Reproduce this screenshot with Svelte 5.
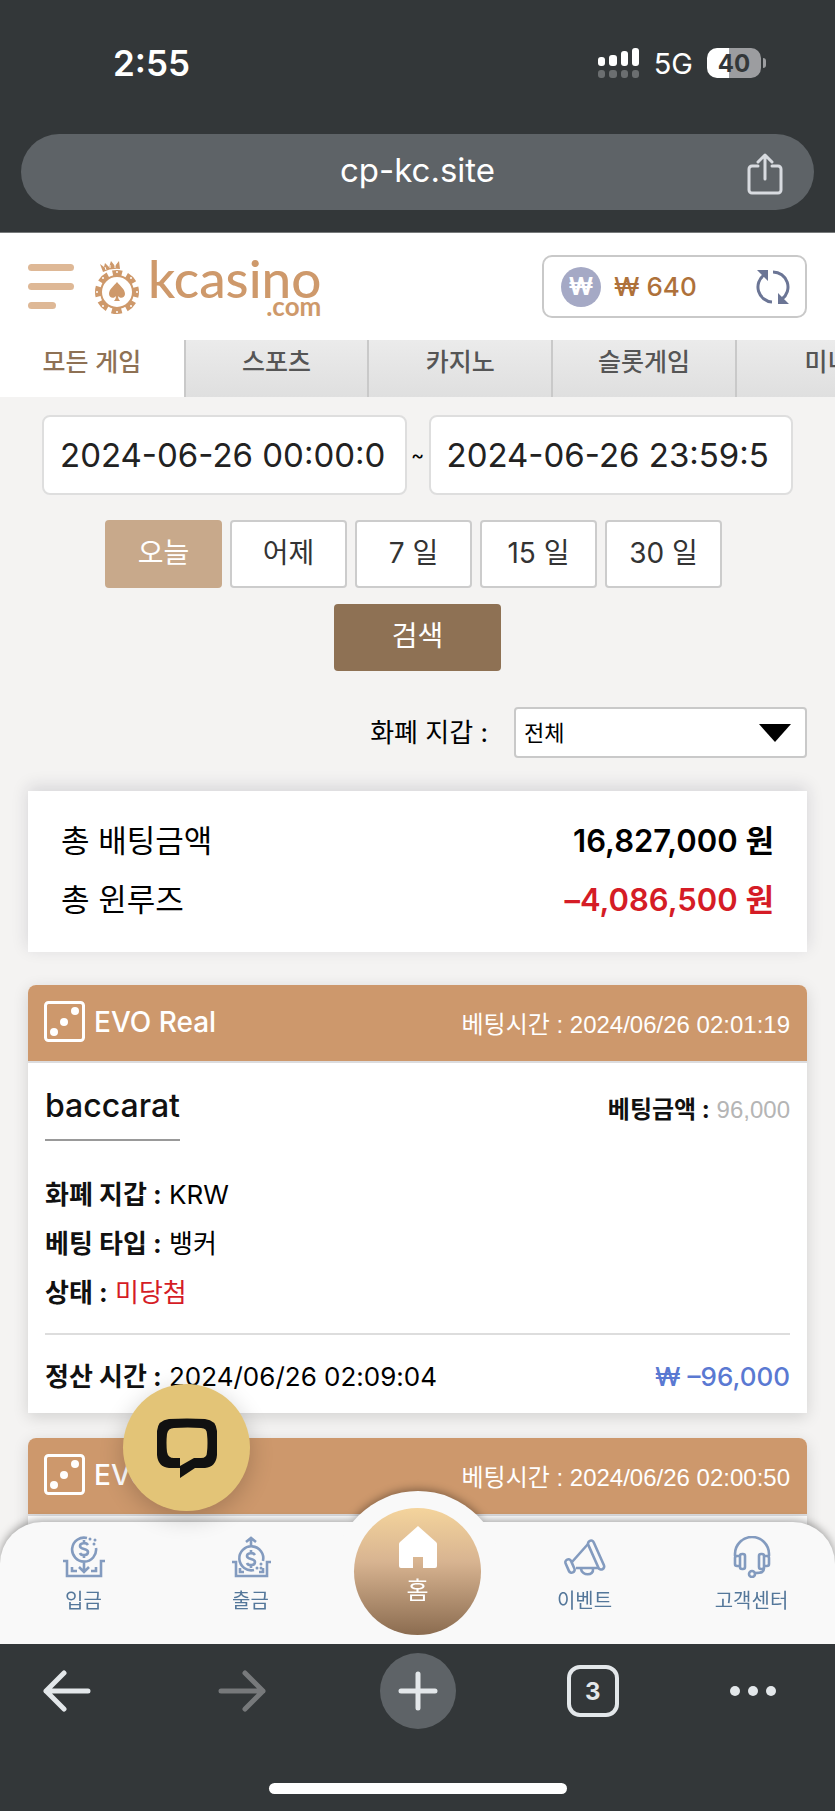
<script>
  const tabs = ['모든 게임', '스포츠', '카지노', '슬롯게임', '미니'];
  const ranges = ['오늘', '어제', '7 일', '15 일', '30 일'];

  const bets = [
    {
      vendor: 'EVO Real',
      placed: '2024/06/26 02:01:19',
      game: 'baccarat',
      amount: '96,000',
      wallet: 'KRW',
      type: '뱅커',
      status: '미당첨',
      settled: '2024/06/26 02:09:04',
      result: '₩ –96,000',
    },
    {
      vendor: 'EVO Real',
      placed: '2024/06/26 02:00:50',
      game: 'baccarat',
      amount: '96,000',
      wallet: 'KRW',
      type: '뱅커',
      status: '미당첨',
      settled: '2024/06/26 02:09:04',
      result: '₩ –96,000',
    },
  ];

  let activeTab = tabs[0];
  let activeRange = ranges[0];
  let from = '2024-06-26 00:00:0';
  let to = '2024-06-26 23:59:5';
  let wallet = 'all';
</script>

<div class="phone">
  <div class="browser-top">
    <div class="status">
      <span class="time">2:55</span>
      <div class="status-right">
        <svg width="42" height="31" viewBox="0 0 42 31" aria-hidden="true">
          <g fill="#fff">
            <rect x="0" y="9" width="7" height="9" rx="3" />
            <rect x="11" y="7" width="8" height="11" rx="3" />
            <rect x="23" y="3" width="7" height="15" rx="3" />
            <rect x="34" y="0" width="7" height="18" rx="3" />
          </g>
          <g fill="#6b6e70">
            <rect x="0" y="22" width="7" height="8" rx="3" />
            <rect x="11" y="22" width="8" height="8" rx="3" />
            <rect x="23" y="22" width="7" height="8" rx="3" />
            <rect x="34" y="22" width="7" height="8" rx="3" />
          </g>
        </svg>
        <span class="network">5G</span>
        <div class="battery"><span>40</span></div>
      </div>
    </div>
    <div class="address">
      <span class="url">cp-kc.site</span>
      <button class="share" aria-label="공유">
        <svg width="36" height="42" viewBox="0 0 36 42" fill="none" stroke="#d8dbe0" stroke-width="3" stroke-linecap="round" stroke-linejoin="round">
          <path d="M11 13H5a3 3 0 0 0-3 3v21a3 3 0 0 0 3 3h26a3 3 0 0 0 3-3V16a3 3 0 0 0-3-3h-6M18 26V2M11 9l7-7 7 7" />
        </svg>
      </button>
    </div>
  </div>

  <div class="viewport">
    <div class="page">
      <header>
        <button class="menu" aria-label="메뉴"><i></i><i></i><i></i></button>
        <a class="logo" href="/">
          <svg width="46" height="56" viewBox="0 0 46 56" aria-hidden="true">
            <circle cx="23" cy="33" r="19" fill="none" stroke="#ce996b" stroke-width="6" stroke-dasharray="10 4.9" stroke-dashoffset="5" transform="rotate(-90 23 33)" />
            <circle cx="23" cy="33" r="16" fill="#fff" stroke="#ce996b" stroke-width="2" />
            <g fill="#fff">
              <circle cx="23" cy="13" r="1" /><circle cx="37" cy="19" r="1" /><circle cx="43" cy="33" r="1" />
              <circle cx="37" cy="47" r="1" /><circle cx="23" cy="53" r="1" /><circle cx="9" cy="47" r="1" />
              <circle cx="3" cy="33" r="1" /><circle cx="9" cy="19" r="1" />
            </g>
            <path fill="#ce996b" d="M23 23c3 4 8 7 8 12 0 4-5 5-7 2 0 2 1 4 2 5h-6c1-1 2-3 2-5-2 3-7 2-7-2 0-5 5-8 8-12z" />
            <path fill="#ce996b" d="M9 13 6 5l4 3 1-4 4 4 2-6 4 5 4-5 1 8q-9-1-17 3z" />
            <path fill="none" stroke="#fff" d="m12 11-1-3M16 9V6M21 9V6" />
          </svg>
          <span class="wordmark"><b>kcasino</b><small>.com</small></span>
        </a>
        <div class="balance">
          <span class="coin">₩</span>
          <span class="amount">₩ 640</span>
          <button class="refresh" aria-label="새로고침">
            <svg width="36" height="34" viewBox="0 0 36 34">
              <path d="M17 32A15 15 0 0 1 9 5M18 2a15 15 0 0 1 9 27" fill="none" stroke="#6b7595" stroke-width="3" />
              <path d="M2 0h11v11zM34 34H23V23z" fill="#6b7595" />
            </svg>
          </button>
        </div>
      </header>

      <div class="tabs">
        {#each tabs as tab}
          <button class:active={tab === activeTab} on:click={() => (activeTab = tab)}>{tab}</button>
        {/each}
      </div>

      <form class="filter" on:submit|preventDefault>
        <div class="dates">
          <input type="text" aria-label="시작" bind:value={from} />
          <span>~</span>
          <input type="text" aria-label="종료" bind:value={to} />
        </div>
        <div class="ranges">
          {#each ranges as range}
            <button type="button" class:active={range === activeRange} on:click={() => (activeRange = range)}>{range}</button>
          {/each}
        </div>
        <button class="search" type="submit">검색</button>
      </form>

      <div class="content">
        <div class="wallet">
          <label for="wallet">화폐 지갑 :</label>
          <div class="select">
            <select id="wallet" bind:value={wallet}>
              <option value="all">전체</option>
              <option value="krw">KRW</option>
            </select>
            <svg width="32" height="18" viewBox="0 0 32 18" aria-hidden="true"><path d="M0 0h32L16 18z" /></svg>
          </div>
        </div>

        <dl class="summary">
          <div><dt>총 배팅금액</dt><dd>16,827,000 원</dd></div>
          <div><dt>총 윈루즈</dt><dd class="loss">–4,086,500 원</dd></div>
        </dl>

        {#each bets as bet}
          <article class="bet">
            <div class="bet-head">
              <svg width="42" height="42" viewBox="0 0 42 42" aria-hidden="true">
                <rect x="1.5" y="1.5" width="38" height="38" rx="3" fill="none" stroke="#fff" stroke-width="3" />
                <g fill="#fff"><circle cx="31" cy="10" r="4" /><circle cx="20" cy="21" r="4" /><circle cx="10" cy="31" r="4" /></g>
              </svg>
              <h2>{bet.vendor}</h2>
              <span class="placed">베팅시간 : {bet.placed}</span>
            </div>
            <div class="bet-body">
              <div class="bet-title">
                <h3>{bet.game}</h3>
                <p><strong>베팅금액 :</strong> <span class="stake">{bet.amount}</span></p>
              </div>
              <p><strong>화폐 지갑 :</strong> {bet.wallet}</p>
              <p><strong>베팅 타입 :</strong> {bet.type}</p>
              <p><strong>상태 :</strong> <span class="loss">{bet.status}</span></p>
              <div class="bet-foot">
                <p><strong>정산 시간 :</strong> {bet.settled}</p>
                <span class="result">{bet.result}</span>
              </div>
            </div>
          </article>
        {/each}
      </div>
    </div>

    <nav>
      <a href="/deposit">
        <svg width="42" height="42" viewBox="0 0 42 42">
          <path d="M0 25h4v15h34V25h4M9 31v4h5M33 31v4h-5M21 25v9M16 31l5 5 5-5M24 2a12 12 0 1 0 9 10" />
          <path d="M25 9c-2-3-8-2-8 1 0 4 8 2 8 6 0 4-7 4-8 1M21 4v3M21 18v4" />
          <path class="dots" d="M27 3v.1M31 8v.1M32 4v.1" />
        </svg>
        입금
      </a>
      <a href="/withdraw">
        <svg width="42" height="42" viewBox="0 0 42 42">
          <path d="M2 26h4v14h31V26h4M10 32v4h4M33 32v4h-4M21 11V2M16 6l5-4 5 4M24 34a12 12 0 1 1 9-9" />
          <path d="M25 19c-2-3-8-2-8 1 0 4 8 2 8 6 0 4-7 4-8 1M21 14v3M21 28v4" />
          <path class="dots" d="M27 32v.1M31 28v.1M31 32v.1" />
        </svg>
        출금
      </a>
      <a class="home" href="/">
        <svg width="44" height="42" viewBox="0 0 44 42"><path d="M22 0 40 16q1 1 1 2v22q0 2-2 2H27V31H17v11H5q-2 0-2-2V18q0-1 1-2z" /></svg>
        홈
      </a>
      <a href="/event">
        <svg width="42" height="42" viewBox="0 0 42 42">
          <rect x="29" y="4" width="6" height="31" rx="3" transform="rotate(-24 31 19)" />
          <rect x="3" y="23" width="6" height="14" rx="3" transform="rotate(-24 6 30)" />
          <path d="M8 26 24 8M12 32h23M17 33c1 7 13 7 12 0" />
        </svg>
        이벤트
      </a>
      <a href="/support">
        <svg width="42" height="42" viewBox="0 0 42 42">
          <path d="M4 20v-2a17 17 0 0 1 34 0v2M9 20H6q-2 0-2 2v6q0 2 2 2h3M33 20h3q2 0 2 2v6q0 2-2 2h-3M33 32c0 4-2 5-9 5" />
          <rect x="9" y="18" width="5" height="15" rx="2" /><rect x="28" y="18" width="5" height="15" rx="2" />
          <circle cx="21" cy="38" r="3" />
        </svg>
        고객센터
      </a>
    </nav>

    <button class="chat" aria-label="채팅">
      <svg width="60" height="60" viewBox="0 0 60 60">
        <path fill="#111" fill-rule="evenodd" d="M12 1q18-1 36 0 11 1 12 12 1 12 0 24-1 12-12 13H38L23 60V50H12Q1 49 0 37-1 25 0 13 1 2 12 1zM17 10q-6 0-7 6-1 9 0 18 1 6 7 6h6v8l14-8h7q6 0 6-6 1-9 0-18 0-6-6-6-13-1-27 0z" />
      </svg>
    </button>
  </div>

  <div class="browser-bottom">
    <div class="toolbar">
      <button aria-label="뒤로"><svg width="50" height="42" viewBox="0 0 50 42"><path d="M46 21H4M22 3 4 21l18 18" /></svg></button>
      <button aria-label="앞으로" disabled><svg width="50" height="42" viewBox="0 0 50 42"><path d="M4 21h42M28 3l18 18-18 18" /></svg></button>
      <button aria-label="새 탭"><span class="plus"><svg width="42" height="42" viewBox="0 0 42 42"><path d="M21 4v34M4 21h34" /></svg></span></button>
      <button aria-label="탭 목록"><span class="count">3</span></button>
      <button aria-label="더보기"><svg width="50" height="12" viewBox="0 0 50 12"><g fill="#e3e7ea" stroke="none"><circle cx="7" cy="6" r="5" /><circle cx="25" cy="6" r="5" /><circle cx="43" cy="6" r="5" /></g></svg></button>
    </div>
    <div class="indicator"></div>
  </div>
</div>

<style>
  :global(body) {
    background: #333739;
  }

  .phone, .phone * {
    box-sizing: border-box;
  }

  .phone {
    color: #000;
    display: flex;
    flex-direction: column;
    font-family: Inter, "Noto Sans CJK KR", sans-serif;
    font-size: 26px;
    height: 100vh;
  }

  button {
    background: none;
    border: 0;
    color: inherit;
    font: inherit;
    padding: 0;
  }

  a {
    color: inherit;
    text-decoration: none;
  }

  svg {
    display: block;
    flex: none;
  }

  h2, h3, p, dl, dd {
    margin: 0;
  }

  /* browser chrome */
  .browser-top {
    background: #333739;
    border-bottom: 1px solid #777a7b;
    color: #fff;
    flex: none;
    padding: 0 21px 22px;
  }

  .status {
    align-items: center;
    display: flex;
    height: 134px;
    justify-content: space-between;
    padding: 0 53px 8px 92px;
  }

  .time {
    font-size: 35px;
    font-weight: 600;
  }

  .status-right {
    align-items: center;
    display: flex;
    gap: 14px;
  }

  .network {
    font-size: 29px;
  }

  .battery {
    align-items: center;
    background: linear-gradient(90deg, #fff 40%, #9c9da0 40%);
    border-radius: 10px;
    color: #333739;
    display: flex;
    font-size: 24px;
    font-weight: 700;
    height: 30px;
    justify-content: center;
    position: relative;
    width: 54px;
  }

  .battery::after {
    background: #9c9da0;
    border-radius: 0 4px 4px 0;
    content: "";
    height: 10px;
    position: absolute;
    right: -5px;
    width: 3px;
  }

  .address {
    align-items: center;
    background: #5e6367;
    border-radius: 38px;
    display: flex;
    font-size: 33px;
    height: 76px;
    justify-content: center;
    position: relative;
  }

  .url {
    padding-bottom: 4px;
  }

  .share {
    position: absolute;
    right: 31px;
    top: 19px;
  }

  .viewport {
    background: #f4f3f2;
    flex: 1;
    min-height: 0;
    position: relative;
  }

  .page {
    height: 100%;
    overflow-y: auto;
    scrollbar-width: none;
  }

  /* site header */
  header {
    align-items: center;
    background: #fff;
    display: flex;
    height: 107px;
    padding: 0 28px;
  }

  .menu {
    display: flex;
    flex-direction: column;
    gap: 12px;
    width: 46px;
  }

  .menu i {
    background: #deb896;
    border-radius: 4px;
    height: 7px;
  }

  .menu i:last-child {
    width: 28px;
  }

  .logo {
    color: #ce996b;
    display: flex;
    gap: 8px;
    margin-left: 20px;
  }

  .wordmark {
    display: flex;
    flex-direction: column;
    font-family: Lato, sans-serif;
  }

  .wordmark b {
    font-size: 53px;
    font-weight: 500;
    line-height: 38px;
  }

  .wordmark small {
    font-size: 26px;
    font-weight: 700;
    line-height: 18px;
    text-align: right;
  }

  .balance {
    align-items: center;
    border: 2px solid #c9c9c9;
    border-radius: 10px;
    display: flex;
    height: 63px;
    margin-left: auto;
    padding: 0 14px 0 17px;
    width: 265px;
  }

  .coin {
    align-items: center;
    background: #a5a9c5;
    border-radius: 50%;
    color: #fff;
    display: flex;
    font-size: 24px;
    font-weight: 700;
    height: 40px;
    justify-content: center;
    width: 40px;
  }

  .amount {
    color: #ae713a;
    font-weight: 500;
    margin: 0 auto 0 13px;
  }

  .tabs {
    display: flex;
    height: 57px;
    overflow: hidden;
  }

  .tabs button {
    background: linear-gradient(#ebebeb, #dfdfdf);
    border-left: 2px solid #c9c9c9;
    color: #555;
    flex: 0 0 22%;
    font-size: 25px;
    font-weight: 500;
    padding-bottom: 18px;
  }

  .tabs .active {
    background: #fff;
    border: 0;
    color: #8e7154;
  }

  /* search form */
  .filter {
    align-items: center;
    display: flex;
    flex-direction: column;
    padding: 18px 42px 0;
  }

  .dates {
    align-items: center;
    display: flex;
    width: 100%;
  }

  .dates span {
    flex: none;
    font-size: 20px;
    text-align: center;
    width: 22px;
  }

  .dates input {
    background: #fff;
    border: 2px solid #dedede;
    border-radius: 8px;
    color: #222;
    flex: 1;
    font: inherit;
    font-size: 33px;
    height: 80px;
    min-width: 0;
    padding: 0 16px;
  }

  .ranges {
    display: flex;
    gap: 8px;
    margin: 25px 8px 16px 0;
  }

  .ranges button {
    background: #fff;
    border: 2px solid #ccc;
    border-radius: 4px;
    color: #333;
    font-size: 28px;
    height: 68px;
    padding-bottom: 7px;
    width: 117px;
  }

  .ranges .active {
    background: #c8a98b;
    border-color: #c8a98b;
    color: #fff;
  }

  .search {
    background: #8e7154;
    border-radius: 4px;
    color: #fff;
    font-size: 28px;
    height: 67px;
    padding-bottom: 7px;
    width: 167px;
  }

  .content {
    padding: 36px 28px 160px;
  }

  .wallet {
    align-items: center;
    display: flex;
    gap: 26px;
    justify-content: flex-end;
  }

  .wallet label {
    padding-bottom: 4px;
  }

  .select {
    position: relative;
    width: 293px;
  }

  select {
    appearance: none;
    background: #fff;
    border: 2px solid #c9c9c9;
    border-radius: 4px;
    color: #000;
    display: block;
    font: inherit;
    font-size: 22px;
    height: 51px;
    padding: 0 8px;
    width: 100%;
  }

  .select svg {
    pointer-events: none;
    position: absolute;
    right: 16px;
    top: 17px;
  }

  .summary {
    background: #fff;
    box-shadow: 0 -4px 16px rgba(30, 30, 60, .14);
    font-size: 31px;
    line-height: 59px;
    margin: 33px 0;
    padding: 20px 33px 23px;
  }

  .summary div {
    display: flex;
    justify-content: space-between;
  }

  .summary dd {
    font-weight: 600;
  }

  .loss {
    color: #d51c26;
  }

  /* bet cards */
  .bet {
    background: #fff;
    border-radius: 8px 8px 0 0;
    box-shadow: 0 4px 16px rgba(0, 0, 0, .14);
    margin-bottom: 25px;
  }

  .bet-head {
    align-items: center;
    background: #cd986c;
    border-bottom: 2px solid #dcdcde;
    border-radius: 8px 8px 0 0;
    color: #fff;
    display: flex;
    gap: 8px;
    height: 78px;
    padding: 0 17px 2px 16px;
  }

  .bet-head h2 {
    font-size: 28px;
    font-weight: 500;
  }

  .placed {
    font-family: "Liberation Sans", "Noto Sans CJK KR", sans-serif;
    font-size: 24px;
    margin-left: auto;
  }

  .bet-body {
    line-height: 49px;
    padding: 22px 17px 12px;
  }

  .bet-body strong {
    color: #111;
    font-weight: 700;
  }

  .bet-title {
    display: flex;
    justify-content: space-between;
    margin-bottom: 29px;
  }

  .bet-title h3 {
    border-bottom: 2px solid #999;
    color: #111;
    font-size: 32px;
    font-weight: 500;
    line-height: 42px;
    padding-bottom: 12px;
  }

  .bet-title p {
    font-size: 24px;
  }

  .stake {
    color: #b5b5b5;
    font-family: "Liberation Sans", sans-serif;
  }

  .bet-foot {
    border-top: 2px solid #ddd;
    display: flex;
    justify-content: space-between;
    margin-top: 16px;
    padding-top: 17px;
  }

  .result {
    color: #5a79d2;
    font-weight: 500;
  }

  /* bottom navigation floats over the page */
  nav {
    bottom: 0;
    clip-path: inset(-60px 0 0);
    color: #54779a;
    display: flex;
    filter: drop-shadow(0 -2px 4px rgba(0, 0, 0, .35));
    font-size: 20px;
    height: 122px;
    isolation: isolate;
    left: 0;
    position: absolute;
    right: 0;
  }

  nav::before, nav::after {
    background: #f9f9f9;
    content: "";
    position: absolute;
    z-index: -1;
  }

  nav::before {
    border-radius: 42px 42px 0 0;
    inset: 0;
  }

  nav::after {
    border-radius: 50% 50% 0 0 / 100% 100% 0 0;
    height: 84px;
    left: calc(50% - 84px);
    top: -31px;
    width: 168px;
  }

  nav a {
    align-items: center;
    display: flex;
    flex: 1;
    flex-direction: column;
    gap: 9px;
    line-height: 28px;
    padding-top: 14px;
  }

  nav svg {
    fill: none;
    stroke: #839bbf;
    stroke-width: 2.6;
  }

  nav .dots {
    stroke-linecap: round;
    stroke-width: 3;
  }

  nav .home {
    background: linear-gradient(#f4d49c, #d8b491 42%, #8b6c50);
    border-radius: 50%;
    color: #fff;
    flex: none;
    font-size: 24px;
    height: 127px;
    margin: -14px 20px 0;
    padding-top: 18px;
    width: 127px;
  }

  nav .home svg {
    fill: #fff;
    stroke: none;
  }

  .chat {
    align-items: center;
    background: #e3c477;
    border-radius: 50%;
    bottom: 133px;
    box-shadow: 0 6px 24px rgba(0, 0, 0, .2);
    display: flex;
    height: 127px;
    justify-content: center;
    left: 123px;
    position: absolute;
    width: 127px;
  }

  .browser-bottom {
    align-items: center;
    background: #333739;
    display: flex;
    flex: none;
    flex-direction: column;
    height: 167px;
    justify-content: space-between;
    padding: 9px 0 17px;
  }

  .toolbar {
    display: grid;
    grid-template-columns: repeat(5, 21%);
    height: 76px;
    justify-content: center;
    width: 100%;
  }

  .toolbar button {
    align-items: center;
    display: flex;
    justify-content: center;
  }

  .toolbar button:last-child {
    padding-right: 30px;
  }

  .toolbar svg {
    fill: none;
    stroke: #e3e7ea;
    stroke-linecap: round;
    stroke-linejoin: round;
    stroke-width: 5;
  }

  .toolbar button:disabled svg {
    stroke: #77797b;
  }

  .plus {
    background: #5e6367;
    border-radius: 50%;
    padding: 17px;
  }

  .count {
    align-items: center;
    border: 4px solid #e3e7ea;
    border-radius: 13px;
    color: #e3e7ea;
    display: flex;
    font-size: 24px;
    font-weight: 700;
    height: 52px;
    justify-content: center;
    width: 52px;
  }

  .indicator {
    background: #fff;
    border-radius: 6px;
    height: 11px;
    width: 298px;
  }
</style>
